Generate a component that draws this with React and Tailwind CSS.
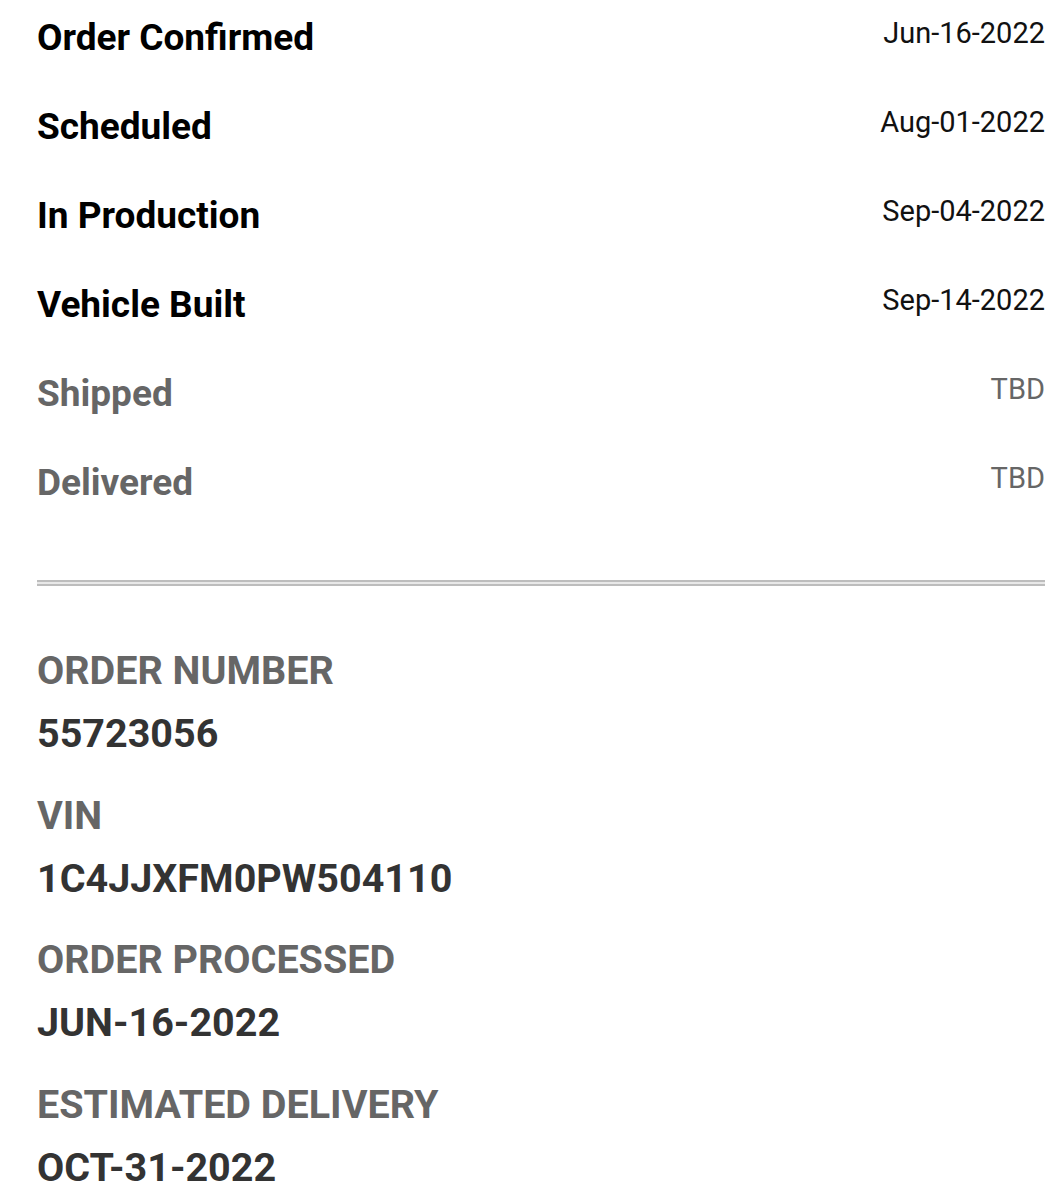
import React from 'react';

const steps = [
  { label: 'Order Confirmed', date: 'Jun-16-2022', done: true },
  { label: 'Scheduled', date: 'Aug-01-2022', done: true },
  { label: 'In Production', date: 'Sep-04-2022', done: true },
  { label: 'Vehicle Built', date: 'Sep-14-2022', done: true },
  { label: 'Shipped', date: 'TBD', done: false },
  { label: 'Delivered', date: 'TBD', done: false }
];

const details = [
  { label: 'ORDER NUMBER', value: '55723056' },
  { label: 'VIN', value: '1C4JJXFM0PW504110' },
  { label: 'ORDER PROCESSED', value: 'JUN-16-2022' },
  { label: 'ESTIMATED DELIVERY', value: 'OCT-31-2022' }
];

export default function App() {
  return (
    <div className="min-h-screen bg-white pl-[37px] pr-[13px] pt-[16px] font-['Roboto',sans-serif]">
      {/* status timeline */}
      <div className="flex flex-col">
        {steps.map((step) => (
          <div key={step.label} className="flex items-start justify-between h-[89px]">
            <h4
              className={
                step.done
                  ? 'text-[37px] font-bold text-black leading-[43px]'
                  : 'text-[37px] font-bold text-[#666] leading-[43px]'
              }>
              {step.label}
            </h4>
            <p
              className={
                step.done
                  ? 'text-[29px] text-[#111] leading-[34px]'
                  : 'text-[29px] text-[#666] leading-[34px]'
              }>
              {step.date}
            </p>
          </div>
        ))}
      </div>

      <div className="mt-[30px] h-[6px] border-y-2 border-[#bdbdbd] bg-[#e8e8e8]" />

      {/* order details */}
      <div className="flex flex-col pt-[62px]">
        {details.map((item) => (
          <div key={item.label} className="flex flex-col h-[144.67px]">
            <p className="text-[39.5px] font-bold text-[#666] leading-[46px]">{item.label}</p>
            <p className="mt-[17px] text-[39.5px] font-bold text-[#333] leading-[46px]">
              {item.value}
            </p>
          </div>
        ))}
      </div>
    </div>
  );
}
